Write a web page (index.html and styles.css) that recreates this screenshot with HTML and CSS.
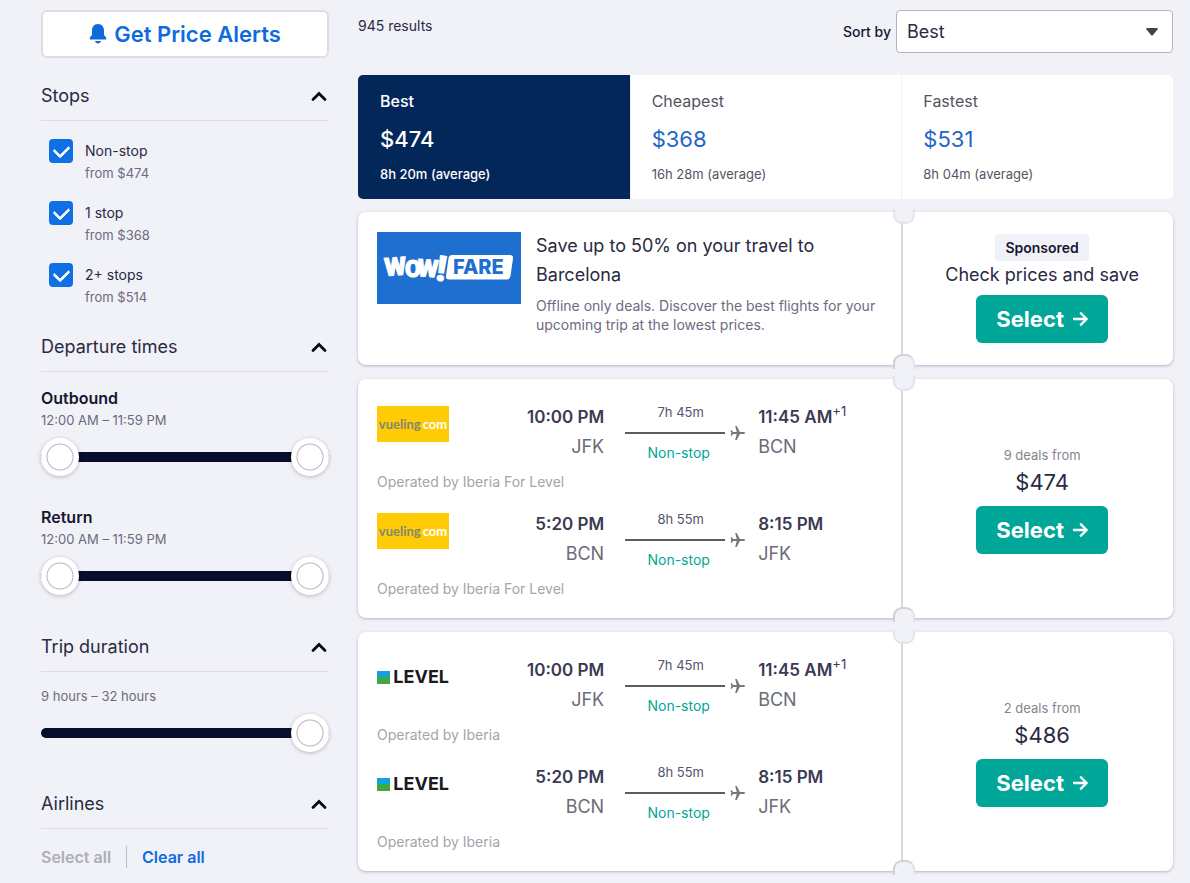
FILE: index.html
```html
<!DOCTYPE html>
<html lang="en">
<head>
    <meta charset="UTF-8">
    <meta name="viewport" content="width=device-width, initial-scale=1.0">
    <title>Flights JFK - BCN</title>
    <link rel="stylesheet" href="styles.css">
</head>
<body>
    <!-- Shared icons -->
    <svg class="icon-defs" aria-hidden="true">
        <symbol id="chevron" viewBox="0 0 16 16">
            <path d="M2 11.5 L8 5.500 L14 11.5" fill="none" stroke="currentColor" stroke-width="2.800" stroke-linecap="round" />
        </symbol>
        <symbol id="arrow" viewBox="0 0 16 16">
            <path d="M1 8 H14 M8.2 1.6 L14.6 8 L8.2 14.4" fill="none" stroke="currentColor" stroke-width="2.3" />
        </symbol>
        <symbol id="plane" viewBox="0 0 16 16">
            <path d="M16 8c0-.7-.8-1.100-1.800-1.100h-3.700L7.200.6H5.500l1.700 6.300H3.300L1.900 5H.6l.8 3-.8 3h1.300l1.400-1.900h3.900l-1.700 6.300h1.700l3.300-6.300h3.700c1 0 1.800-.4 1.800-1.100z" fill="currentColor" />
        </symbol>
    </svg>

    <div class="page">
        <aside class="sidebar">
            <button class="alerts-btn" type="button">
                <svg class="bell" viewBox="0 0 18 20" aria-hidden="true">
                    <path d="M9 0C5.200 0 3 2.900 3 6.500V11L.8 13.600V15.500H17.200V13.600L15 11V6.500C15 2.900 12.800 0 9 0zM6 17c.4 1.600 1.500 2.400 3 2.400s2.600-.8 3-2.400z" fill="currentColor" />
                </svg>
                Get Price Alerts
            </button>

            <section class="filter">
                <button class="filter-head" type="button">Stops <svg class="chevron"><use href="#chevron" /></svg></button>
                <div class="stops">
                    <label class="stop"><input type="checkbox" checked><span>Non-stop<small>from $474</small></span></label>
                    <label class="stop"><input type="checkbox" checked><span>1 stop<small>from $368</small></span></label>
                    <label class="stop"><input type="checkbox" checked><span>2+ stops<small>from $514</small></span></label>
                </div>
            </section>

            <section class="filter">
                <button class="filter-head" type="button">Departure times <svg class="chevron"><use href="#chevron" /></svg></button>
                <div class="ranges">
                    <div class="range-group">
                        <h3>Outbound</h3>
                        <p>12:00 AM – 11:59 PM</p>
                        <div class="slider">
                            <input type="range" min="0" max="1439" value="0" aria-label="Outbound earliest">
                            <input type="range" min="0" max="1439" value="1439" aria-label="Outbound latest">
                        </div>
                    </div>
                    <div class="range-group">
                        <h3>Return</h3>
                        <p>12:00 AM – 11:59 PM</p>
                        <div class="slider">
                            <input type="range" min="0" max="1439" value="0" aria-label="Return earliest">
                            <input type="range" min="0" max="1439" value="1439" aria-label="Return latest">
                        </div>
                    </div>
                </div>
            </section>

            <section class="filter">
                <button class="filter-head" type="button">Trip duration <svg class="chevron"><use href="#chevron" /></svg></button>
                <div class="ranges">
                    <div class="range-group">
                        <p>9 hours – 32 hours</p>
                        <div class="slider">
                            <input type="range" min="9" max="32" value="32" aria-label="Longest trip">
                        </div>
                    </div>
                </div>
            </section>

            <section class="filter">
                <button class="filter-head" type="button">Airlines <svg class="chevron"><use href="#chevron" /></svg></button>
                <div class="airline-actions">
                    <button type="button" disabled>Select all</button>
                    <button type="button">Clear all</button>
                </div>
            </section>
        </aside>

        <main class="results">
            <header class="results-head">
                <p class="count">945 results</p>
                <div class="sort">
                    <label for="sort">Sort by</label>
                    <div class="select-box">
                        <select id="sort">
                            <option>Best</option>
                            <option>Cheapest</option>
                            <option>Fastest</option>
                        </select>
                        <svg class="caret" viewBox="0 0 12 8" aria-hidden="true"><path d="M1 0H11Q12.500 0 11.500 1.500L7 7Q6 8 5 7L.5 1.500Q-.5 0 1 0z" fill="#444" /></svg>
                    </div>
                </div>
            </header>

            <div class="tabs">
                <button class="tab active" type="button"><span>Best</span><strong>$474</strong><small>8h 20m (average)</small></button>
                <button class="tab" type="button"><span>Cheapest</span><strong>$368</strong><small>16h 28m (average)</small></button>
                <button class="tab" type="button"><span>Fastest</span><strong>$531</strong><small>8h 04m (average)</small></button>
            </div>

            <article class="ticket">
                <div class="promo">
                    <svg class="promo-logo" viewBox="0 0 144 72" role="img" aria-label="Wow! Fare">
                        <rect width="144" height="72" fill="#1e6fd0" />
                        <path d="M75 23H133Q136.500 23 136 26.500L133.500 44Q133 47.500 129.500 47.500H72Q68.500 47.500 69 44L71.500 26.500Q72 23 75 23z" fill="#fff" />
                        <g class="wow">
                            <text x="8" y="44" transform="rotate(-4 8 44)" font-size="25">W</text>
                            <text x="28" y="45" font-size="23">O</text>
                            <text x="40" y="44" transform="rotate(4 40 44)" font-size="24">W</text>
                            <text x="58" y="48" transform="rotate(8 58 48)" font-size="35">!</text>
                        </g>
                        <text x="76" y="42" class="fare">FARE</text>
                    </svg>
                    <div class="promo-text">
                        <h2>Save up to 50% on your travel to Barcelona</h2>
                        <p>Offline only deals. Discover the best flights for your upcoming trip at the lowest prices.</p>
                    </div>
                </div>
                <div class="stub">
                    <span class="badge">Sponsored</span>
                    <p class="pitch">Check prices and save</p>
                    <button class="select-btn" type="button">Select <svg><use href="#arrow" /></svg></button>
                </div>
            </article>

            <article class="ticket">
                <div class="legs">
                    <div class="leg">
                        <div class="airline vueling">vueling<i>com</i></div>
                        <div class="depart"><b>10:00 PM</b><span>JFK</span></div>
                        <div class="path">
                            <span>7h 45m</span>
                            <div class="line"><svg><use href="#plane" /></svg></div>
                            <span class="nonstop">Non-stop</span>
                        </div>
                        <div class="arrive"><b>11:45 AM<sup>+1</sup></b><span>BCN</span></div>
                        <p class="operator">Operated by Iberia For Level</p>
                    </div>
                    <div class="leg">
                        <div class="airline vueling">vueling<i>com</i></div>
                        <div class="depart"><b>5:20 PM</b><span>BCN</span></div>
                        <div class="path">
                            <span>8h 55m</span>
                            <div class="line"><svg><use href="#plane" /></svg></div>
                            <span class="nonstop">Non-stop</span>
                        </div>
                        <div class="arrive"><b>8:15 PM</b><span>JFK</span></div>
                        <p class="operator">Operated by Iberia For Level</p>
                    </div>
                </div>
                <div class="stub">
                    <p class="deals">9 deals from</p>
                    <p class="price">$474</p>
                    <button class="select-btn" type="button">Select <svg><use href="#arrow" /></svg></button>
                </div>
            </article>

            <article class="ticket">
                <div class="legs">
                    <div class="leg">
                        <div class="airline level">LEVEL</div>
                        <div class="depart"><b>10:00 PM</b><span>JFK</span></div>
                        <div class="path">
                            <span>7h 45m</span>
                            <div class="line"><svg><use href="#plane" /></svg></div>
                            <span class="nonstop">Non-stop</span>
                        </div>
                        <div class="arrive"><b>11:45 AM<sup>+1</sup></b><span>BCN</span></div>
                        <p class="operator">Operated by Iberia</p>
                    </div>
                    <div class="leg">
                        <div class="airline level">LEVEL</div>
                        <div class="depart"><b>5:20 PM</b><span>BCN</span></div>
                        <div class="path">
                            <span>8h 55m</span>
                            <div class="line"><svg><use href="#plane" /></svg></div>
                            <span class="nonstop">Non-stop</span>
                        </div>
                        <div class="arrive"><b>8:15 PM</b><span>JFK</span></div>
                        <p class="operator">Operated by Iberia</p>
                    </div>
                </div>
                <div class="stub">
                    <p class="deals">2 deals from</p>
                    <p class="price">$486</p>
                    <button class="select-btn" type="button">Select <svg><use href="#arrow" /></svg></button>
                </div>
            </article>
        </main>
    </div>
</body>
</html>
```

FILE: styles.css
```css
* {
    box-sizing: border-box;
    margin: 0;
    padding: 0;
}

body {
    background: #f1f1f8;
    color: #2a2a42;
    font-family: Inter, 'Liberation Sans', sans-serif;
    font-size: 14px;
    line-height: 22px;
}

button,
select {
    font-family: inherit;
    cursor: pointer;
}

button {
    border: none;
    background: none;
}

small {
    font-size: 13px;
}

.icon-defs {
    position: absolute;
    width: 0;
    height: 0;
}

.page {
    display: grid;
    grid-template-columns: 288px 1fr;
    gap: 29px;
    padding: 10px 17px 11px 41px;
}

/* Sidebar */
.alerts-btn {
    display: flex;
    justify-content: center;
    align-items: center;
    gap: 7px;
    width: 100%;
    height: 48px;
    margin-bottom: 13px;
    background: #fff;
    border: 2px solid #dedde6;
    border-radius: 6px;
    color: #0f6bdb;
    font-size: 22px;
    font-weight: 600;
}

.bell {
    width: 18px;
    height: 20px;
}

.filter-head {
    display: flex;
    justify-content: space-between;
    align-items: center;
    width: 100%;
    height: 50px;
    padding-right: 2px;
    border-bottom: 1px solid #dddce6;
    color: #2a2a42;
    font-size: 18px;
    text-align: left;
}

.chevron {
    width: 16px;
    height: 16px;
    color: #05051e;
}

.stops {
    display: flex;
    flex-direction: column;
    gap: 16px;
    padding: 18px 8px 13px;
}

.stop {
    display: flex;
    gap: 12px;
    line-height: 23px;
}

.stop small {
    display: block;
    color: #6c6b80;
}

.stop input {
    appearance: none;
    display: grid;
    justify-content: center;
    align-content: center;
    width: 24px;
    height: 24px;
    padding-bottom: 4px;
    background: #fff;
    border: 2px solid #0f6fe4;
    border-radius: 4px;
}

.stop input:checked {
    background: #0f6fe4;
}

.stop input:checked::before {
    content: '';
    width: 8px;
    height: 12px;
    border: solid #fff;
    border-width: 0 3px 3px 0;
    border-radius: 2px;
    transform: rotate(45deg);
}

.ranges {
    display: flex;
    flex-direction: column;
    gap: 28px;
    padding: 13px 0 27px;
}

.range-group h3 {
    margin-top: 2px;
    color: #16162f;
    font-size: 16px;
    font-weight: 600;
}

.range-group p {
    margin-bottom: 7px;
    color: #6c6b80;
    font-size: 13px;
}

.slider {
    display: grid;
    align-items: center;
}

.slider::before {
    content: '';
    grid-area: 1 / 1;
    height: 10px;
    background: #050f2b;
    border-radius: 5px;
}

.slider input {
    grid-area: 1 / 1;
    appearance: none;
    width: 100%;
    height: 38px;
    background: none;
    pointer-events: none;
}

.slider input::-webkit-slider-thumb {
    appearance: none;
    width: 38px;
    height: 38px;
    border-radius: 50%;
    background: radial-gradient(circle, #fff 12px, #b5b5bd 13px, #fff 14px);
    box-shadow: 0 1px 4px rgba(0, 0, 0, 0.25);
    pointer-events: auto;
    cursor: pointer;
}

.airline-actions {
    display: flex;
    padding-top: 17px;
}

.airline-actions button {
    padding-right: 15px;
    color: #0f6bdb;
    font-size: 16px;
    font-weight: 600;
    line-height: 22px;
}

.airline-actions button:disabled {
    color: #aeadbb;
    cursor: default;
}

.airline-actions button + button {
    padding-left: 15px;
    border-left: 1px solid #bcbbc8;
}

/* Results */
.results-head {
    display: flex;
    justify-content: space-between;
    margin-bottom: 22px;
}

.count {
    padding-top: 5px;
}

.sort {
    display: flex;
    align-items: center;
    gap: 5px;
}

.sort label {
    color: #16162f;
    font-weight: 500;
}

.select-box {
    position: relative;
}

.select-box select {
    appearance: none;
    width: 277px;
    height: 43px;
    padding: 0 10px;
    background: #fff;
    border: 1px solid #b2b1bf;
    border-radius: 4px;
    color: #2a2a42;
    font-size: 18px;
}

.caret {
    position: absolute;
    top: 18px;
    right: 15px;
    width: 12px;
    height: 8px;
    pointer-events: none;
}

.tabs {
    display: grid;
    grid-template-columns: repeat(3, 1fr);
    margin-bottom: 13px;
    background: #fff;
    border-radius: 5px;
    overflow: hidden;
}

.tab {
    display: flex;
    flex-direction: column;
    justify-content: center;
    height: 124px;
    padding: 0 22px 2px;
    color: #555463;
    text-align: left;
}

.tab + .tab {
    padding-left: 21px;
    border-left: 1px solid #f1f1f8;
}

.tab span {
    font-size: 16px;
    line-height: 30px;
}

.tab strong {
    color: #1e66c8;
    font-size: 22px;
    font-weight: 400;
    line-height: 46px;
}

.tab small {
    line-height: 24px;
}

.tab.active {
    background: #042759;
    color: #fff;
}

.tab.active span,
.tab.active strong,
.tab.active small {
    color: #fff;
    font-weight: 500;
}

.ticket {
    display: grid;
    grid-template-columns: 2fr 1fr;
    margin-bottom: 14px;
    background: #fff;
    border-radius: 8px;
    box-shadow: 0 1px 3px rgba(40, 40, 60, 0.3);
}

.ticket:last-child {
    margin-bottom: 0;
}

.stub {
    position: relative;
    display: flex;
    flex-direction: column;
    justify-content: center;
    align-items: center;
    padding-left: 8px;
    border-left: 2px solid #d8d8dc;
}

/* Punched notches at both ends of the tear line */
.stub::before,
.stub::after {
    content: '';
    position: absolute;
    left: -10px;
    width: 18px;
    height: 13px;
    background: #f1f1f8;
    border: 2px solid #e4e4ea;
}

.stub::before {
    top: -3px;
    border-top: none;
    border-radius: 0 0 9px 9px;
}

.stub::after {
    bottom: -4px;
    border-color: #d0d0d7;
    border-right-color: #e4e4ea;
    border-bottom: none;
    border-radius: 9px 9px 0 0;
}

.badge {
    padding: 0 10px;
    background: #f1f1f8;
    border-radius: 4px;
    color: #16162f;
    font-weight: 600;
    line-height: 27px;
}

.pitch {
    margin-bottom: 7px;
    font-size: 18px;
    line-height: 27px;
}

.deals {
    color: #85848f;
    font-size: 13px;
}

.price {
    margin-bottom: 8px;
    font-size: 22px;
    line-height: 32px;
}

.select-btn {
    display: flex;
    align-items: center;
    gap: 8px;
    height: 48px;
    padding: 0 20px;
    background: #00a698;
    border-radius: 6px;
    color: #fff;
    font-size: 22px;
    font-weight: 700;
}

.select-btn svg {
    width: 16px;
    height: 16px;
}

.promo {
    display: flex;
    gap: 15px;
    padding: 19px 19px 31px;
}

.promo-logo {
    flex: none;
    width: 144px;
    height: 72px;
    margin-top: 1px;
}

.promo-text {
    max-width: 340px;
}

.promo h2 {
    margin-bottom: 7px;
    font-size: 18px;
    font-weight: 400;
    line-height: 29px;
}

.promo p {
    color: #6c6b80;
    line-height: 19px;
}

.wow {
    fill: #fff;
    stroke: #fff;
    stroke-width: 1px;
    font-family: Roboto, sans-serif;
    font-weight: 900;
}

.fare {
    fill: #1e6fd0;
    font-family: Inter, sans-serif;
    font-size: 20px;
    font-weight: 800;
}

.legs {
    display: flex;
    flex-direction: column;
    gap: 18px;
    padding: 24px 19px 19px;
}

.leg {
    display: grid;
    grid-template-columns: 72px 5fr 154px 4fr;
    row-gap: 10px;
}

.airline {
    display: flex;
    align-items: center;
    justify-content: center;
    height: 36px;
    margin-top: 3px;
}

.vueling {
    gap: 2px;
    background: #ffcb05;
    color: #85866f;
    font-family: Lato, sans-serif;
    font-size: 13px;
    font-weight: 700;
}

.vueling i {
    color: #fff;
    font-style: normal;
}

.level {
    justify-content: space-between;
    color: #1b1b1f;
    font-size: 18px;
    font-weight: 700;
}

.level::before {
    content: '';
    width: 13px;
    height: 13px;
    background: linear-gradient(#13a3dc 50%, #3fa845 50%);
}

.depart,
.arrive {
    display: flex;
    flex-direction: column;
    font-size: 18px;
    line-height: 29px;
    white-space: nowrap;
}

.depart {
    text-align: right;
}

.depart b,
.arrive b {
    color: #3b3a52;
    font-size: 17px;
    font-weight: 600;
}

.depart span,
.arrive span {
    color: #6c6b78;
}

.arrive sup {
    font-size: 13px;
    font-weight: 400;
    line-height: 0;
}

.path {
    padding: 0 13px 0 21px;
    color: #55546a;
    font-size: 13px;
    line-height: 18px;
    text-align: center;
}

.path > span {
    display: block;
    padding-right: 9px;
}

.path .nonstop {
    padding-right: 13px;
    color: #00a698;
    font-size: 14px;
}

.line {
    display: flex;
    align-items: center;
    gap: 5px;
    height: 23px;
}

.line::before {
    content: '';
    flex: 1;
    height: 2px;
    background: #5c5b66;
}

.line svg {
    width: 15px;
    height: 16px;
    color: #77767f;
}

.operator {
    grid-column: 1 / -1;
    color: #a5a4ac;
    line-height: 20px;
}
```
